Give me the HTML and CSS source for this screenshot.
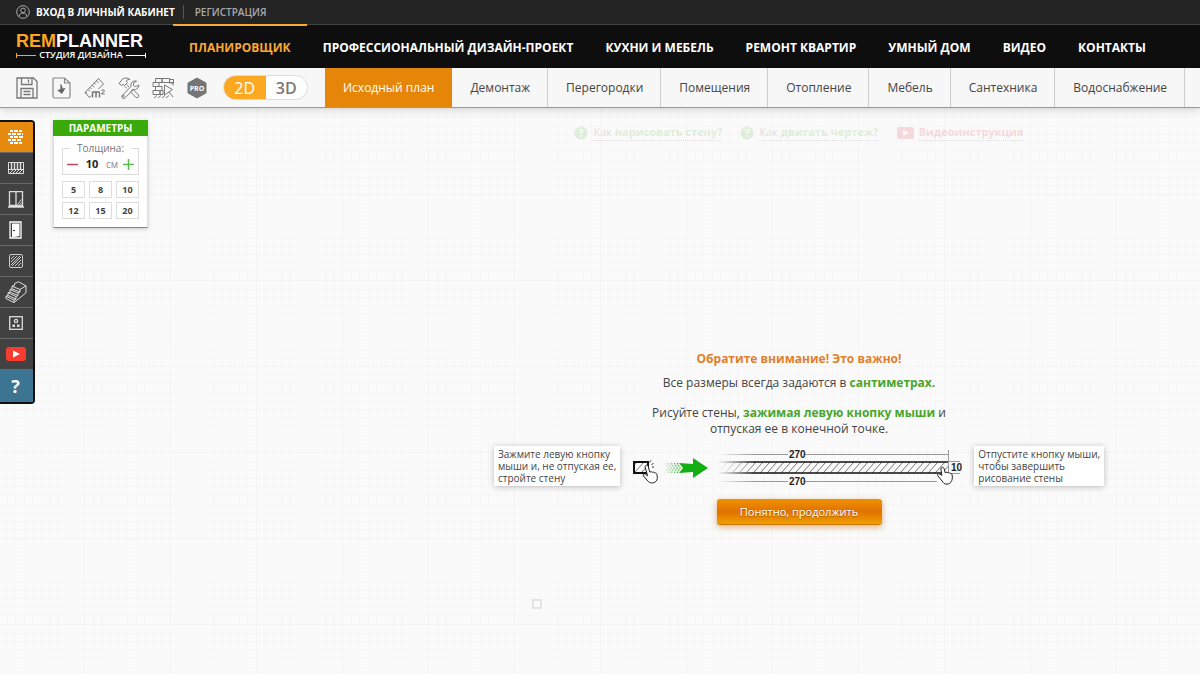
FILE: index.html
```html
<!DOCTYPE html>
<html lang="ru">
<head>
  <meta charset="UTF-8">
  <meta name="viewport" content="width=device-width, initial-scale=1.0">
  <title>Remplanner</title>
  <link rel="stylesheet" href="styles.css">
</head>
<body>
  <div class="top-bar">
    <a href="#" class="login">
      <svg width="14" height="14" viewBox="0 0 14 14" fill="none" stroke="#aaa">
        <circle cx="7" cy="7" r="6.3"/>
        <circle cx="7" cy="5.4" r="2.3"/>
        <path d="M3 11.6c.4-2.4 2-3.5 4-3.5s3.600 1.100 4 3.500"/>
      </svg>
      Вход в личный кабинет
    </a>
    <a href="#" class="register">Регистрация</a>
  </div>

  <header class="header">
    <a href="#" class="logo">
      <span class="logo-name"><span class="logo-rem">REM</span>PLANNER</span>
      <span class="logo-sub">СТУДИЯ ДИЗАЙНА</span>
    </a>
    <nav class="main-nav">
      <a href="#" class="active">Планировщик</a>
      <a href="#">Профессиональный дизайн-проект</a>
      <a href="#">Кухни и мебель</a>
      <a href="#">Ремонт квартир</a>
      <a href="#">Умный дом</a>
      <a href="#">Видео</a>
      <a href="#">Контакты</a>
    </nav>
  </header>

  <div class="toolbar">
    <div class="file-tools">
      <button type="button" aria-label="Сохранить">
        <svg width="22" height="22" viewBox="0 0 22 22" fill="none" stroke="#777" stroke-width="1.3">
          <path d="M1 1h16.500L21 4.500V21H1z"/>
          <path d="M5.500 1v6.500h10.500V1M12.500 2.500v3.200M5 21v-9.500h12V21M7.500 14.500h7M7.500 17.500h7"/>
        </svg>
      </button>
      <button type="button" aria-label="Загрузить">
        <svg width="22" height="22" viewBox="0 0 22 22" fill="none" stroke="#888" stroke-width="1.200">
          <path d="M4 1h10.500L20 6v13.500a1.500 1.500 0 0 1-1.500 1.500H4.500A1.500 1.500 0 0 1 3 19.500V2a1 1 0 0 1 1-1zM14.500 1v5H20"/>
          <path d="M10 7c2 1 2.600 2.500 2.500 4.500l3-.5-3.500 6-5-4 3-.5c.6-1.800.6-3.400 0-5.500z" fill="#666" stroke="none"/>
        </svg>
      </button>
      <button type="button" aria-label="Площадь">
        <svg width="22" height="22" viewBox="0 0 22 22" fill="none" stroke="#777">
          <path d="M7 18.500 5.500 20.500 1 15.500 14.500 1.500 19.500 7 14.500 12M1 15.500l2 .5"/>
          <path d="m4 12.500 2 2M6 10.500l1.500 1.500M8.200 8.200l2 2M10.300 6l1.500 1.500M12.400 3.900l2 2"/>
          <path d="M8.500 20.500v-6M8.500 16.500c.5-2.200 3.500-2.200 3.500 0v4M12 16.500c.5-2.200 3.500-2.200 3.500 0v4" stroke-width="1.500"/>
          <path d="M17.500 14c0-1.600 3-1.600 3 0 0 1-3 1.800-3 3h3.200"/>
        </svg>
      </button>
      <button type="button" aria-label="Инструменты">
        <svg width="22" height="22" viewBox="0 0 22 22" fill="none" stroke="#777" stroke-linejoin="round">
          <path d="m13 9.500-8 8.200a2 2 0 1 0 2.600 2.600l8-8c2.500.8 5.200-1 5.200-4.300l-3 1.700-2.300-1.200V6l3-1.800c-3.300-1-6.300 1.300-5.500 5.300z"/>
          <path d="M1 6.500 4.500 2c3-1.700 6-1 7.500.5-2-.2-3.500.5-3.700 1.500l1.200 1.500-3 3L5 7.200 3.700 8.500zM8.700 7.600l2.300 2.300M6.700 9.300l2 2M13.500 13.500l1.300-1.300 5.700 5.800c1 1.500-1 3.500-2.500 2.500l-5-5.200z"/>
          <circle cx="5.500" cy="19" r=".8"/>
        </svg>
      </button>
      <button type="button" aria-label="Стены">
        <svg width="22" height="22" viewBox="0 0 22 22" fill="none" stroke="#777">
          <path d="M3.500 1.500H10v4H3.500zM10 1.500h7.500v4H10zM17.500 2.500h4V6h-4M1 5.500h6v4H1zM7 5.500h7M3.500 9.500H10v4H3.500zM1 13.500h7v4H1zM8 13.500h3v4H8zM14 5.500h7v3"/>
          <path d="m12.500 8 8 4.500-8 5.500zM17 15l4 5M2 21l3-2.500M6 21l3-2.500M10 21l3-2.500M14 21l3-2.500"/>
        </svg>
      </button>
      <button type="button" aria-label="PRO">
        <svg width="22" height="22" viewBox="0 0 22 22">
          <path d="M11 1 20 6v10l-9 5-9-5V6z" fill="#757575" stroke="#757575" stroke-linejoin="round"/>
          <text x="11" y="14" text-anchor="middle" class="icon-pro">PRO</text>
        </svg>
      </button>
    </div>
    <div class="view-switch">
      <button type="button" class="active">2D</button>
      <button type="button">3D</button>
    </div>
    <nav class="plan-tabs">
      <a href="#" class="active">Исходный план</a>
      <a href="#">Демонтаж</a>
      <a href="#">Перегородки</a>
      <a href="#">Помещения</a>
      <a href="#">Отопление</a>
      <a href="#">Мебель</a>
      <a href="#">Сантехника</a>
      <a href="#">Водоснабжение</a>
    </nav>
  </div>

  <main class="workspace">
    <div class="side">
      <div class="side-menu">
        <button type="button" class="active" aria-label="Стены">
          <svg width="16" height="14" viewBox="0 0 16 14" fill="#fff">
            <path d="M2 0h3v2H2zM6 0h4v2H6zM11 0h3v2h-3zM0 3h3v2H0zM4 3h4v2H4zM9 3h4v2H9zM14 3h1v2h-1zM2 6h3v2H2zM6 6h4v2H6zM11 6h4v2h-4zM0 9h3v2H0zM4 9h4v2H4zM9 9h4v2H9zM2 12h3v2H2zM6 12h4v2H6zM11 12h3v2h-3z"/>
          </svg>
        </button>
        <button type="button" aria-label="Перила">
          <svg width="16" height="12" viewBox="0 0 16 12" fill="none" stroke="#ddd">
            <path d="M.5.500h15v11H.5zM.5 7.500h15"/>
            <path d="M3.500 1v6M6.500 1v6M9.500 1v6M12.500 1v6" stroke-width="1.400"/>
            <path d="m2 11 3-3M5 11l3-3M8 11l3-3M11 11l3-3"/>
          </svg>
        </button>
        <button type="button" aria-label="Окна">
          <svg width="16" height="17" viewBox="0 0 16 17" fill="none" stroke="#ddd">
            <path d="M1.500.500h13v14h-13zM8 .5v14M0 16h16" stroke-width="1.300"/>
            <path d="M9.500 13.500l4-5M12 13.500l1.500-2"/>
          </svg>
        </button>
        <button type="button" aria-label="Двери">
          <svg width="13" height="18" viewBox="0 0 13 18" fill="none" stroke="#fff">
            <path d="M1 17V1h11v16z" stroke-width="1.300"/>
            <path d="M3 2.500h7.500v12.500L3 16.500z" fill="#fff" stroke="none"/>
            <path d="M4 9.500h2" stroke="#333"/>
          </svg>
        </button>
        <button type="button" aria-label="Пол">
          <svg width="14" height="14" viewBox="0 0 14 14" fill="none" stroke="#ccc">
            <rect x=".5" y=".5" width="13" height="13" rx="1.500"/>
            <path d="M2 5l3-3M2 8l6-6M2 11l9-9M3 12l9-9M6 12l6-6M9 12l3-3"/>
          </svg>
        </button>
        <button type="button" aria-label="Лестница">
          <svg width="22" height="22" viewBox="0 0 22 22" fill="none" stroke="#ddd" stroke-linejoin="round">
            <path d="m9.500 2.500 4-1.700 7.500 4v7L9 21.500l-8-4v-2.300l2-.7v-2.700l2-.7V8.500l2-.7V5.200l2.500-.7zM9 21.500V19l2-1v-2.500l2-1V12l2-1V8.500l6-3.700"/>
            <path d="m1 15.200 8 3.800M3 14.500l8 3.500M3 11.800l8 3.700M5 11.100l8 3.400M5 8.500l8 3.500M7 7.800l8 3.200M7 5.200l8 3.300"/>
          </svg>
        </button>
        <button type="button" aria-label="Розетки">
          <svg width="14" height="14" viewBox="0 0 14 14" fill="none" stroke="#ddd" stroke-width="1.300">
            <rect x=".7" y=".7" width="12.600" height="12.600"/>
            <circle cx="7" cy="5" r="1.600"/>
            <path d="M3.500 8.500h2.500v2.500H3.500zM8 8.500h2.500v2.500H8z" fill="#ddd" stroke="none"/>
          </svg>
        </button>
        <button type="button" aria-label="Видео">
          <svg width="20" height="14" viewBox="0 0 20 14">
            <rect width="20" height="14" rx="3" fill="#f93c31"/>
            <path d="m7 3.500 7 3.500-7 3.500z" fill="#fff"/>
          </svg>
        </button>
        <button type="button" class="help">?</button>
      </div>

      <form class="params">
        <h2>Параметры</h2>
        <fieldset>
          <legend><label for="thickness">Толщина:</label></legend>
          <button type="button" aria-label="Меньше">
            <svg width="11" height="11" viewBox="0 0 11 11" stroke="#c0485a" stroke-width="1.500"><path d="M0 5.500h11"/></svg>
          </button>
          <input type="text" id="thickness" value="10">
          <span class="unit">см</span>
          <button type="button" aria-label="Больше">
            <svg width="11" height="11" viewBox="0 0 11 11" stroke="#5cb84a" stroke-width="1.500"><path d="M0 5.500h11M5.500 0v11"/></svg>
          </button>
        </fieldset>
        <div class="presets">
          <button type="button">5</button>
          <button type="button">8</button>
          <button type="button">10</button>
          <button type="button">12</button>
          <button type="button">15</button>
          <button type="button">20</button>
        </div>
      </form>
    </div>

    <section class="guide">
      <div class="hints">
        <a href="#" class="hint">
          <svg width="14" height="14" viewBox="0 0 14 14"><circle cx="7" cy="7" r="6.500" fill="#49ad25"/><text x="7" y="11" text-anchor="middle" class="icon-q">?</text></svg>
          <span>Как <b>нарисовать стену?</b></span>
        </a>
        <a href="#" class="hint">
          <svg width="14" height="14" viewBox="0 0 14 14"><circle cx="7" cy="7" r="6.500" fill="#49ad25"/><text x="7" y="11" text-anchor="middle" class="icon-q">?</text></svg>
          <span>Как <b>двигать чертеж?</b></span>
        </a>
        <a href="#" class="hint video">
          <svg width="17" height="12" viewBox="0 0 17 12"><rect width="17" height="12" rx="2" fill="#e32636"/><path d="m6 3 6 3-6 3z" fill="#fff"/></svg>
          <span><b>Видеоинструкция</b></span>
        </a>
      </div>

      <div class="message">
        <h1>Обратите внимание! Это важно!</h1>
        <p>Все размеры всегда задаются в <b>сантиметрах.</b></p>
        <p>Рисуйте стены, <b>зажимая левую кнопку мыши</b> и<br>отпуская ее в конечной точке.</p>
      </div>

      <div class="demo">
        <p class="tip">Зажмите левую кнопку<br>мыши и, не отпуская ее,<br>стройте стену</p>
        <svg class="demo-wall" width="330" height="42" viewBox="-1 -2 330 42" fill="none">
          <defs>
            <pattern id="hatch" width="7" height="12" patternUnits="userSpaceOnUse" patternTransform="skewX(-42)">
              <path d="M3.500 0v12" stroke="#666" stroke-width=".9"/>
            </pattern>
            <linearGradient id="fade">
              <stop offset="0" stop-color="#f9f9f9"/>
              <stop offset="1" stop-color="#f9f9f9" stop-opacity="0"/>
            </linearGradient>
          </defs>
          <!-- начало стены -->
          <rect x="1" y="15" width="14" height="11" fill="url(#hatch)" stroke="#111" stroke-width="2"/>
          <path d="m16.500 15.500 1.500-2M18.500 17.500l2-1M19 20h2" stroke="#333"/>
          <path d="M12.800 18.500c1.300-.7 2.200 0 2.500 1.200l1.500 5.500c.8-.8 2-.6 2.500.2.900-.6 2-.3 2.400.6 1-.3 1.900.3 2.200 1.600.8 3 .6 5.200-1 6.800-2.400 2.200-6 2-8-.3l-4.500-5.300c-.5-1.600.8-2.400 2.200-1.500l2 1.500-2.500-8.800c-.1-.7 0-1.200.7-1.500z" fill="#fff" stroke="#222"/>
          <!-- стрелка -->
          <path d="m32 16 3 5-3 5M35 16l3 5-3 5M38 16l3 5-3 5M41 16l3 5-3 5M44 16l3 5-3 5" stroke="#4cbc48" stroke-width="1.500" stroke-dasharray="1.500 1"/>
          <path d="M30 14h14v14H30z" fill="url(#fade)"/>
          <path d="m46 16 14 1v-6l15 10-15 10v-6l-14 1 4-5z" fill="#12ae12"/>
          <!-- стена с размерами -->
          <rect x="86" y="15" width="229" height="11" fill="url(#hatch)"/>
          <path d="M86 15h229M86 26h229" stroke="#111" stroke-width="1.600"/>
          <path d="M86 7.500h69M172 7.500h143M86 34.500h69M172 34.500h132M315.500 3v24M315 14.500h12M315 26.500h12" stroke="#999"/>
          <path d="M85 5h36v32H85z" fill="url(#fade)"/>
          <text x="156" y="11" class="size">270</text>
          <text x="156" y="38" class="size">270</text>
          <text x="318" y="24" class="size">10</text>
          <path d="M308.800 20.500c1.200-.5 2 .1 2.300 1.200l1 4c.8-.8 2-.6 2.500.2.900-.6 2-.3 2.400.6 1-.3 1.900.3 2.100 1.500.6 2.700.2 5-1 6.800-2.200 3.200-6 3-8 .5l-5.500-6.800c-.4-1.600.9-2.200 2.300-1.400l2 1.300-1-6.300c-.1-.8.2-1.300.9-1.600z" fill="#fff" stroke="#222"/>
        </svg>
        <p class="tip">Отпустите кнопку мыши,<br>чтобы завершить<br>рисование стены</p>
      </div>

      <button type="button" class="continue">Понятно, продолжить</button>
    </section>

    <div class="cursor-mark"></div>
  </main>
</body>
</html>
```
FILE: styles.css
```css
* {
  box-sizing: border-box;
}
body {
  margin: 0;
  min-height: 100vh;
  display: flex;
  flex-direction: column;
  font-family: "Open Sans", sans-serif;
  font-size: 12px;
  color: #444;
  background-color: #f9f9f9;
  overflow-x: hidden;
}
a {
  text-decoration: none;
  color: inherit;
}
button {
  font-family: inherit;
  border: none;
  padding: 0;
  background: none;
  cursor: pointer;
}
svg {
  display: block;
  flex-shrink: 0;
}

/* Верхняя панель */
.top-bar {
  display: flex;
  align-items: center;
  height: 25px;
  padding-left: 16px;
  background-color: #242424;
  border-bottom: 1px solid #444;
  font-size: 10px;
  font-weight: bold;
  text-transform: uppercase;
}
.login {
  display: flex;
  align-items: center;
  gap: 6px;
  padding-right: 8px;
  color: #fff;
}
.register {
  padding-left: 11px;
  border-left: 1px solid #555;
  color: #aaa;
  font-weight: 600;
}

/* Шапка */
.header {
  display: flex;
  height: 43px;
  padding-left: 16px;
  background-color: #0e0e0e;
  color: #fff;
}
.logo {
  width: 157px;
  flex-shrink: 0;
  padding-top: 7px;
}
.logo-name {
  display: block;
  font: bold 18px/18px "Liberation Sans", Arial, sans-serif;
}
.logo-rem {
  color: #fba524;
}
.logo-sub {
  display: flex;
  align-items: center;
  gap: 3px;
  width: 130px;
  font-size: 9px;
  font-weight: 600;
  line-height: 10px;
  white-space: nowrap;
}
.logo-sub::before,
.logo-sub::after {
  content: "";
  flex: 1;
  height: 5px;
  background: linear-gradient(currentColor, currentColor) center / 100% 1px no-repeat;
}
.logo-sub::before {
  color: #fba524;
  border-left: 1px solid;
}
.logo-sub::after {
  border-right: 1px solid;
}
.main-nav {
  display: flex;
  font-size: 12px;
  font-weight: bold;
  text-transform: uppercase;
  white-space: nowrap;
}
.main-nav a {
  padding: 0 16px;
  line-height: 46px;
}
.main-nav .active {
  color: #fba930;
  box-shadow: 0 -1px #fba930, inset 0 1px #fba930;
}

/* Панель инструментов */
.toolbar {
  display: flex;
  align-items: center;
  height: 40px;
  background-color: #f7f7f7;
  border-bottom: 1px solid #999;
  box-shadow: 0 2px 8px rgba(0, 0, 0, 0.15);
  position: relative;
  z-index: 1;
}
.file-tools {
  display: flex;
  gap: 12px;
  padding: 0 15px 0 16px;
}
.icon-pro {
  font: bold 7px "Open Sans", sans-serif;
  fill: #fff;
}
.view-switch {
  display: flex;
  width: 85px;
  height: 25px;
  margin-right: 17px;
  border: 1px solid #ddd;
  border-radius: 13px;
  background-color: #fff;
  overflow: hidden;
  flex-shrink: 0;
}
.view-switch button {
  flex: 1;
  font-size: 16px;
  font-weight: 600;
  color: #777;
}
.view-switch .active {
  background-color: #fca822;
  color: #fff;
  font-weight: normal;
}
.plan-tabs {
  display: flex;
  height: 39px;
  white-space: nowrap;
}
.plan-tabs a {
  padding: 0 17px 0 18px;
  line-height: 39px;
  border-right: 1px solid #ccc;
}
.plan-tabs .active {
  background-color: #e68609;
  border-color: #e68609;
  color: #fff;
}

/* Рабочая область */
.workspace {
  position: relative;
  flex: 1;
  display: flex;
  align-items: flex-start;
  background-color: #fafafa;
  background-image:
    linear-gradient(90deg, #f4f4f4 1px, transparent 1px),
    linear-gradient(#f4f4f4 1px, transparent 1px),
    repeating-linear-gradient(90deg, #f7f7f7 0 1px, transparent 1px 10%),
    repeating-linear-gradient(#f7f7f7 0 1px, transparent 1px 10%);
  background-size: 86px 86px;
  background-position: -2px 0;
}
.side {
  display: flex;
  align-items: flex-start;
  gap: 18px;
  width: 398px;
  padding-top: 12px;
}
.side-menu {
  display: flex;
  flex-direction: column;
  width: 35px;
  border: solid #111;
  border-width: 2px 2px 2px 0;
  border-radius: 0 4px 4px 0;
  overflow: hidden;
}
.side-menu button {
  display: flex;
  align-items: center;
  justify-content: center;
  height: 31px;
  padding-right: 2px;
  background-color: #414141;
  border-bottom: 1px solid #686868;
}
.side-menu .active {
  background-color: #e68a10;
}
.side-menu .help {
  height: 32px;
  background-color: #3b7591;
  border: none;
  color: #fff;
  font-size: 18px;
  font-weight: bold;
}
.params {
  width: 95px;
  background-color: #fff;
  border: 1px solid #ddd;
  border-top: none;
  border-bottom-color: #888;
  box-shadow: 0 1px 4px rgba(0, 0, 0, 0.2);
  padding-bottom: 8px;
}
.params h2 {
  margin: 0 -1px 6px;
  background-color: #3aaa0a;
  color: #fff;
  font-size: 10px;
  line-height: 16px;
  text-align: center;
  text-transform: uppercase;
}
.params fieldset {
  display: flex;
  align-items: center;
  justify-content: space-between;
  margin: 0 8px 6px;
  padding: 2px 4px;
  border: 1px solid #ddd;
  min-width: 0;
}
.params legend {
  margin: 0 auto;
  padding: 0 7px;
  font-size: 10px;
  line-height: 12px;
  color: #777;
}
.params input {
  width: 18px;
  padding: 0;
  border: none;
  font: bold 11px/16px "Open Sans", sans-serif;
  color: #222;
  text-align: center;
}
.unit {
  font-size: 10px;
  color: #888;
}
.presets {
  display: grid;
  grid-template-columns: repeat(3, 1fr);
  gap: 4px;
  margin: 0 8px;
}
.presets button {
  height: 17px;
  border: 1px solid #ddd;
  font-size: 9px;
  font-weight: bold;
  color: #444;
}

/* Подсказка по рисованию стен */
.guide {
  flex: 1;
  display: flex;
  flex-direction: column;
  align-items: center;
  padding-top: 16px;
}
.hints {
  display: flex;
  gap: 18px;
  margin-bottom: 209px;
  font-size: 11px;
  line-height: 16px;
  white-space: nowrap;
  opacity: 0.15;
}
.hint {
  display: flex;
  align-items: center;
  gap: 5px;
}
.hint span {
  border-bottom: 1px dotted;
}
.hint b {
  color: #49ad25;
}
.hint.video b {
  color: #e32636;
}
.icon-q {
  font: bold 11px "Open Sans", sans-serif;
  fill: #fff;
}
.message {
  text-align: center;
  font-size: 12px;
  line-height: 16px;
}
.message h1 {
  margin: 0 0 7px;
  font-size: 12px;
  line-height: 18px;
  color: #e2802a;
}
.message p {
  margin: 0 0 14px;
}
.message b {
  color: #49a52c;
}
.demo {
  display: flex;
  align-items: center;
  gap: 12px;
  margin: -6px 0 12px;
}
.tip {
  margin: 0;
  padding: 2px 4px;
  background-color: #fff;
  box-shadow: 0 1px 6px rgba(0, 0, 0, 0.25);
  font-size: 10px;
  line-height: 12px;
  white-space: nowrap;
}
.size {
  font: bold 10px "Liberation Sans", Arial, sans-serif;
  fill: #222;
}
.continue {
  width: 165px;
  height: 26px;
  border-radius: 3px;
  border-bottom: 1px solid #c87508;
  background-image: linear-gradient(#f29100, #df7200 50%, #f0a000);
  box-shadow: 0 2px 6px rgba(200, 100, 0, 0.5);
  color: #fff;
  font-size: 11px;
  text-shadow: 0 1px 1px rgba(0, 0, 0, 0.3);
}
.cursor-mark {
  position: absolute;
  left: 532px;
  top: 491px;
  width: 10px;
  height: 10px;
  border: 2px solid #e4e4e4;
}
```
